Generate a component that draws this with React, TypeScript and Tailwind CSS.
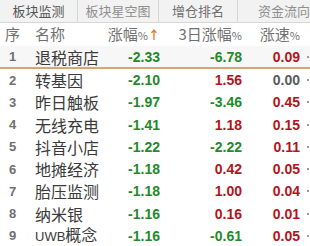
const rows = [
  { no: 1, name: "退税商店", chg: "-2.33", chg3: "-6.78", spd: "0.09" },
  { no: 2, name: "转基因", chg: "-2.10", chg3: "1.56", spd: "0.00" },
  { no: 3, name: "昨日触板", chg: "-1.97", chg3: "-3.46", spd: "0.45" },
  { no: 4, name: "无线充电", chg: "-1.41", chg3: "1.18", spd: "0.15" },
  { no: 5, name: "抖音小店", chg: "-1.22", chg3: "-2.22", spd: "0.11" },
  { no: 6, name: "地摊经济", chg: "-1.18", chg3: "0.42", spd: "0.05" },
  { no: 7, name: "胎压监测", chg: "-1.18", chg3: "1.00", spd: "0.04" },
  { no: 8, name: "纳米银", chg: "-1.16", chg3: "0.16", spd: "0.01" },
  { no: 9, name: "UWB概念", chg: "-1.16", chg3: "-0.61", spd: "0.05" },
]

function tone(v: string) {
  const n = parseFloat(v)
  if (n > 0) return "text-[#b3141c]"
  if (n < 0) return "text-[#25892c]"
  return "text-[#5a5a5a]"
}

const cjk = "font-['Noto_Sans_CJK_SC',sans-serif]"
const num = "font-['Liberation_Sans',Arial,sans-serif] font-bold text-[14px] leading-none"

function Name({ text }: { text: string }) {
  // latin prefix (e.g. UWB) is drawn narrower, like in the original
  const m = text.match(/^([A-Za-z]+)(.*)$/)
  if (!m) return <>{text}</>
  return (
    <>
      <span className="text-[13px] font-['Liberation_Sans',Arial,sans-serif]">{m[1]}</span>
      {m[2]}
    </>
  )
}

export default function App() {
  return (
    <div className="w-[310px] h-[246px] overflow-hidden bg-white">
      {/* tabs */}
      <div className={`flex h-[23px] bg-[#f2f2f2] border-b border-[#d6d6d6] text-[13px] ${cjk}`}>
        <div className="w-[88px] flex items-center justify-center text-[#555] border-r border-[#d6d6d6]">板块监测</div>
        <div className="w-[92px] flex items-center justify-center text-[#8f8f8f] border-r border-[#d6d6d6]">板块星空图</div>
        <div className="w-[89px] flex items-center justify-center text-[#6f6f6f] border-r border-[#d6d6d6]">增仓排名</div>
        <div className="flex-1 flex items-center pl-[20px] text-[#8f8f8f] whitespace-nowrap">资金流向</div>
      </div>

      {/* header */}
      <div className={`flex items-center h-[23px] text-[15px] text-[#707070] ${cjk}`}>
        <div className="w-[30px] pl-[5px]">序</div>
        <div className="w-[80px] pl-[5px]">名称</div>
        <div className="w-[50px] flex justify-end items-center whitespace-nowrap">
          涨幅<span className="text-[11px] self-end mb-[2px]">%</span>
          <span className="text-[12px] text-[#e07b1a] font-bold">↑</span>
        </div>
        <div className="w-[82px] flex justify-end whitespace-nowrap">
          3日涨幅<span className="text-[11px] self-end mb-[2px]">%</span>
        </div>
        <div className="w-[58px] flex justify-end whitespace-nowrap">
          涨速<span className="text-[11px] self-end mb-[2px]">%</span>
        </div>
      </div>

      {/* rows */}
      {rows.map((r) => (
        <div
          key={r.no}
          className={`flex items-center ${r.no === 1 ? "h-[23px] bg-[#f7f7f7] border-b-2 border-[#d9a572]" : "h-[22.25px]"}`}
        >
          <div className="w-[30px] pl-[9px] text-[13px] leading-none font-bold text-[#707070] font-['Liberation_Sans',Arial,sans-serif]">{r.no}</div>
          <div className={`w-[80px] pl-[5px] text-[16px] leading-[18px] text-[#3a3a3a] ${cjk} whitespace-nowrap`}>
            <Name text={r.name} />
          </div>
          <div className={`w-[50px] text-right ${num} ${tone(r.chg)}`}>{r.chg}</div>
          <div className={`w-[82px] text-right ${num} ${tone(r.chg3)}`}>{r.chg3}</div>
          <div className={`w-[58px] text-right ${num} ${tone(r.spd)}`}>{r.spd}</div>
          <div className="ml-[7px] w-[2px] h-[2px] bg-[#9a9a9a]" />
        </div>
      ))}
    </div>
  )
}
